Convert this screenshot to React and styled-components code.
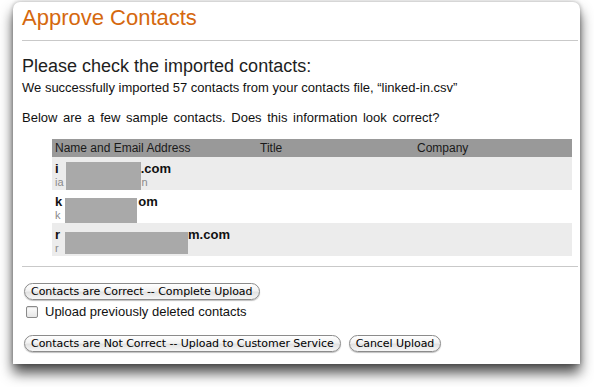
import React from 'react';
import styled, { createGlobalStyle } from 'styled-components';

const GlobalStyle = createGlobalStyle`
  html, body {
    margin: 0;
    background: #fff;
  }
  body {
    font-family: "Liberation Sans", Arial, sans-serif;
  }
`;

const Page = styled.div`
  padding: 2px 0 24px 13px;
`;

const Window = styled.div`
  width: 567px;
  height: 362px;
  box-sizing: border-box;
  padding: 0 2px 0 9px;
  background: #fff;
  border-radius: 7px 7px 0 0;
  box-shadow: 0 9px 13px rgba(0, 0, 0, 0.7), 0 0 4px rgba(0, 0, 0, 0.3);
`;

const Title = styled.h1`
  margin: 0;
  padding-top: 3px;
  font-size: 22px;
  line-height: 26px;
  font-weight: normal;
  color: #d5680e;
`;

const Rule = styled.div`
  height: 1px;
  background: #c9c9c9;
  margin-top: ${p => p.gap}px;
`;

const Heading = styled.h2`
  margin: 14px 0 0;
  font-size: 18px;
  line-height: 22px;
  font-weight: normal;
  color: #1e1e1e;
`;

const Text = styled.p`
  margin: ${p => p.gap}px 0 0;
  font-size: 13px;
  line-height: 16px;
  word-spacing: ${p => p.spread || 0}px;
  color: #111;
`;

const Table = styled.div`
  margin: 13px 0 0 30px;
  width: 520px;
  display: grid;
  grid-template-columns: 205px 157px 158px;
`;

const HeadCell = styled.div`
  background: #999;
  height: 18px;
  line-height: 18px;
  font-size: 12px;
  color: #1a1a1a;
  padding-left: 3px;
`;

const Cell = styled.div`
  position: relative;
  height: 33px;
  box-sizing: border-box;
  padding: 4px 3px 2px;
  background: ${p => (p.shaded ? '#ececec' : '#fff')};
`;

const NameLine = styled.div`
  font-size: 13px;
  line-height: 15px;
  font-weight: bold;
  color: #111;
  white-space: nowrap;
`;

const EmailLine = styled.div`
  font-size: 11px;
  line-height: 12px;
  color: #8a8a8a;
  white-space: nowrap;
`;

const Hidden = styled.span`
  display: inline-block;
  width: ${p => p.w}px;
`;

const Redaction = styled.div`
  position: absolute;
  left: ${p => p.x}px;
  top: ${p => p.y}px;
  width: ${p => p.w}px;
  height: ${p => p.h}px;
  background: #a9a9a9;
`;

const Actions = styled.div`
  padding-top: 16px;
  display: flex;
  flex-direction: column;
  align-items: flex-start;
`;

const ButtonRow = styled.div`
  display: flex;
  gap: 8px;
  margin-top: ${p => p.gap || 0}px;
  padding-left: 2px;
`;

const Button = styled.button`
  height: 17px;
  padding: 0 6px;
  border: 1px solid #8b8b8b;
  border-radius: 9px;
  background: linear-gradient(to bottom, #ffffff 0%, #f2f2f2 45%, #e2e2e2 55%, #f6f6f6 100%);
  box-shadow: 0 1px 1px rgba(0, 0, 0, 0.25);
  font-family: "DejaVu Sans", sans-serif;
  font-size: 11px;
  line-height: 15px;
  letter-spacing: -0.05px;
  color: #000;
`;

const CheckLabel = styled.label`
  display: flex;
  align-items: center;
  gap: 7px;
  margin-top: 4px;
  padding-left: 4px;
  font-size: 13px;
  line-height: 16px;
  color: #111;
`;

const Box = styled.span`
  width: 10px;
  height: 10px;
  border: 1px solid #8a8a8a;
  border-radius: 2px;
  background: linear-gradient(to bottom, #fdfdfd, #e6e6e6);
  box-shadow: inset 0 1px 1px rgba(0, 0, 0, 0.12);
`;

const contacts = [
  { name: ['i', 82, '.com'], email: ['ia', 78, 'n'], box: [14, 5, 75, 28] },
  { name: ['k', 76, 'om'], email: ['k', 0, ''], box: [13, 8, 72, 25] },
  { name: ['r', 128, 'm.com'], email: ['r', 100, 'n'], box: [13, 9, 123, 22] },
];

export default function App() {
  return (
    <Page>
      <GlobalStyle />
      <Window>
        <Title>Approve Contacts</Title>
        <Rule gap={9} />
        <Heading>Please check the imported contacts:</Heading>
        <Text gap={3}>We successfully imported 57 contacts from your contacts file, “linked-in.csv”</Text>
        <Text gap={14} spread={2}>Below are a few sample contacts. Does this information look correct?</Text>

        <Table>
          <HeadCell>Name and Email Address</HeadCell>
          <HeadCell>Title</HeadCell>
          <HeadCell>Company</HeadCell>
          {contacts.map((c, i) => {
            const shaded = i % 2 === 0;
            const [x, y, w, h] = c.box;
            return (
              <React.Fragment key={i}>
                <Cell shaded={shaded}>
                  <NameLine>
                    {c.name[0]}
                    <Hidden w={c.name[1]} />
                    {c.name[2]}
                  </NameLine>
                  <EmailLine>
                    {c.email[0]}
                    <Hidden w={c.email[1]} />
                    {c.email[2]}
                  </EmailLine>
                  <Redaction x={x} y={y} w={w} h={h} />
                </Cell>
                <Cell shaded={shaded} />
                <Cell shaded={shaded} />
              </React.Fragment>
            );
          })}
        </Table>

        <Rule gap={10} />

        <Actions>
          <ButtonRow>
            <Button>Contacts are Correct -- Complete Upload</Button>
          </ButtonRow>
          <CheckLabel>
            <Box />
            Upload previously deleted contacts
          </CheckLabel>
          <ButtonRow gap={15}>
            <Button>Contacts are Not Correct -- Upload to Customer Service</Button>
            <Button>Cancel Upload</Button>
          </ButtonRow>
        </Actions>
      </Window>
    </Page>
  );
}
